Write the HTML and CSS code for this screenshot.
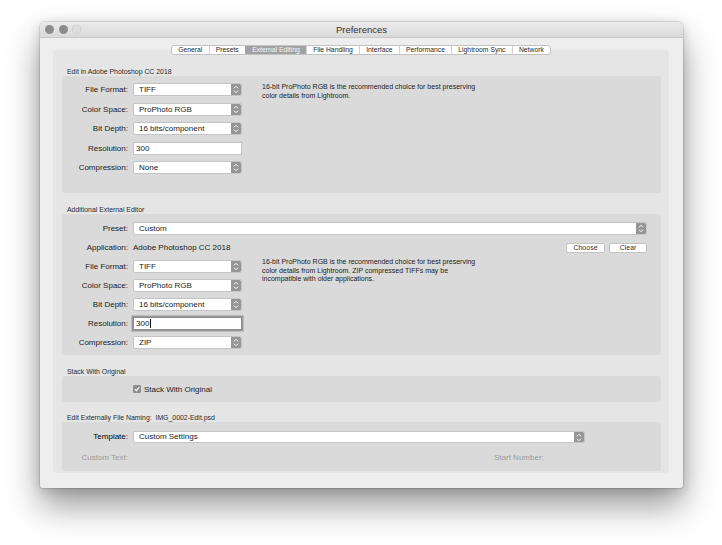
FILE: index.html
```html
<!DOCTYPE html>
<html>
<head>
<meta charset="utf-8">
<link rel="stylesheet" href="styles.css">
</head>
<body>
<div class="stage">
<div class="window">
  <div class="titlebar">
    <div class="lights"><span class="light"></span><span class="light"></span><span class="light off"></span></div>
    <div class="title">Preferences</div>
    <div></div>
  </div>
  <div class="content">
    <div class="tabs">
      <span class="tab">General</span>
      <span class="tab">Presets</span>
      <span class="tab active">External Editing</span>
      <span class="tab">File Handling</span>
      <span class="tab">Interface</span>
      <span class="tab">Performance</span>
      <span class="tab">Lightroom Sync</span>
      <span class="tab">Network</span>
    </div>
    <div class="panel">
      <div class="sec-head">Edit in Adobe Photoshop CC 2018</div>
      <div class="box box1">
        <div class="label">File Format:</div>
        <div class="select"><span class="val">TIFF</span><span class="arrow"><svg width="6" height="9" viewBox="0 0 6 9"><path d="M1 3.3 L3 1.3 L5 3.3 M1 5.7 L3 7.7 L5 5.7" fill="none" stroke="#fff" stroke-width="1"/></svg></span></div>
        <div class="desc">16-bit ProPhoto RGB is the recommended choice for best preserving<br>color details from Lightroom.</div>
        <div class="label">Color Space:</div>
        <div class="select"><span class="val">ProPhoto RGB</span><span class="arrow"><svg width="6" height="9" viewBox="0 0 6 9"><path d="M1 3.3 L3 1.3 L5 3.3 M1 5.7 L3 7.7 L5 5.7" fill="none" stroke="#fff" stroke-width="1"/></svg></span></div>
        <div class="label">Bit Depth:</div>
        <div class="select"><span class="val">16 bits/component</span><span class="arrow"><svg width="6" height="9" viewBox="0 0 6 9"><path d="M1 3.3 L3 1.3 L5 3.3 M1 5.7 L3 7.7 L5 5.7" fill="none" stroke="#fff" stroke-width="1"/></svg></span></div>
        <div class="label">Resolution:</div>
        <div class="input">300</div>
        <div class="label">Compression:</div>
        <div class="select"><span class="val">None</span><span class="arrow"><svg width="6" height="9" viewBox="0 0 6 9"><path d="M1 3.3 L3 1.3 L5 3.3 M1 5.7 L3 7.7 L5 5.7" fill="none" stroke="#fff" stroke-width="1"/></svg></span></div>
      </div>

      <div class="sec-head gap12">Additional External Editor</div>
      <div class="box box2">
        <div class="label">Preset:</div>
        <div class="select wide"><span class="val">Custom</span><span class="arrow"><svg width="6" height="9" viewBox="0 0 6 9"><path d="M1 3.3 L3 1.3 L5 3.3 M1 5.7 L3 7.7 L5 5.7" fill="none" stroke="#fff" stroke-width="1"/></svg></span></div>
        <div class="label">Application:</div>
        <div class="appval">Adobe Photoshop CC 2018</div>
        <div class="buttons"><span class="btn">Choose</span><span class="btn">Clear</span></div>
        <div class="label">File Format:</div>
        <div class="select"><span class="val">TIFF</span><span class="arrow"><svg width="6" height="9" viewBox="0 0 6 9"><path d="M1 3.3 L3 1.3 L5 3.3 M1 5.7 L3 7.7 L5 5.7" fill="none" stroke="#fff" stroke-width="1"/></svg></span></div>
        <div class="desc desc2">16-bit ProPhoto RGB is the recommended choice for best preserving<br>color details from Lightroom. ZIP compressed TIFFs may be<br>incompatible with older applications.</div>
        <div class="label">Color Space:</div>
        <div class="select"><span class="val">ProPhoto RGB</span><span class="arrow"><svg width="6" height="9" viewBox="0 0 6 9"><path d="M1 3.3 L3 1.3 L5 3.3 M1 5.7 L3 7.7 L5 5.7" fill="none" stroke="#fff" stroke-width="1"/></svg></span></div>
        <div class="label">Bit Depth:</div>
        <div class="select"><span class="val">16 bits/component</span><span class="arrow"><svg width="6" height="9" viewBox="0 0 6 9"><path d="M1 3.3 L3 1.3 L5 3.3 M1 5.7 L3 7.7 L5 5.7" fill="none" stroke="#fff" stroke-width="1"/></svg></span></div>
        <div class="label">Resolution:</div>
        <div class="input focus">300<span class="caret"></span></div>
        <div class="label">Compression:</div>
        <div class="select"><span class="val">ZIP</span><span class="arrow"><svg width="6" height="9" viewBox="0 0 6 9"><path d="M1 3.3 L3 1.3 L5 3.3 M1 5.7 L3 7.7 L5 5.7" fill="none" stroke="#fff" stroke-width="1"/></svg></span></div>
      </div>

      <div class="sec-head gap12">Stack With Original</div>
      <div class="box box3">
        <span class="check"><svg width="8" height="8" viewBox="0 0 8 8"><path d="M1.8 4.2 L3.3 5.7 L6.2 2.3" fill="none" stroke="#fff" stroke-width="1.2"/></svg></span>
        <span class="checklabel">Stack With Original</span>
      </div>

      <div class="sec-head gap11">Edit Externally File Naming:&nbsp; IMG_0002-Edit.psd</div>
      <div class="box box4">
        <div class="row4">
          <div class="label dark">Template:</div>
          <div class="select tmpl"><span class="val">Custom Settings</span><span class="arrow"><svg width="6" height="9" viewBox="0 0 6 9"><path d="M1 3.3 L3 1.3 L5 3.3 M1 5.7 L3 7.7 L5 5.7" fill="none" stroke="#fff" stroke-width="1"/></svg></span></div>
        </div>
        <div class="row4">
          <div class="label dim">Custom Text:</div>
          <div class="label dim start">Start Number:</div>
        </div>
      </div>
    </div>
  </div>
</div>
</div>
</body>
</html>
```
FILE: styles.css
```css
* { box-sizing: border-box; }
html, body { height: 100%; }
body {
  margin: 0;
  background: #ffffff;
  font-family: "Liberation Sans", Arial, sans-serif;
  color: #1a1a1a;
}
.stage {
  width: 722px;
  height: 545px;
  padding: 22px 0 0 40px;
  background: #ffffff;
}
.window {
  width: 643px;
  height: 466px;
  background: #eeeeee;
  border-radius: 5px 5px 3px 3px;
  box-shadow: 0 18px 34px rgba(0,0,0,0.40), 0 2px 12px rgba(0,0,0,0.16), 0 0 0 1px rgba(0,0,0,0.10);
  display: flex;
  flex-direction: column;
}
.titlebar {
  height: 16px;
  flex: none;
  background: linear-gradient(#eaeaea, #dadada);
  border-bottom: 1px solid #c8c8c8;
  border-radius: 5px 5px 0 0;
  display: grid;
  grid-template-columns: 1fr auto 1fr;
  align-items: center;
}
.lights { display: flex; gap: 4.5px; padding-left: 5px; }
.light {
  width: 9px; height: 9px; border-radius: 50%;
  background: #8c8c8c;
}
.light.off { background: #dcdcdc; box-shadow: inset 0 0 0 0.5px #c4c4c4; }
.title { font-size: 9.5px; color: #333; }
.content {
  flex: 1;
  padding: 7px 14px 15px 13px;
  display: flex;
  flex-direction: column;
}
.tabs {
  align-self: center;
  display: flex;
  height: 10px;
  position: relative;
  z-index: 1;
  background: #fff;
  border: 1px solid #c2c2c2;
  border-radius: 3px;
  overflow: hidden;
}
.tab {
  font-size: 6.8px;
  line-height: 8px;
  padding: 0 6.2px;
  color: #2a2a2a;
  border-left: 1px solid #d4d4d4;
  white-space: nowrap;
}
.tab:first-child { border-left: none; }
.tab.active { background: #a2a2a2; color: #f6f6f6; border-left-color: #a2a2a2; }
.panel {
  margin-top: -5px;
  height: 423px;
  background: #e5e5e5;
  border-radius: 4px;
  padding: 17px 8px 2px 9px;
}
.sec-head {
  height: 9px;
  line-height: 9px;
  font-size: 6.9px;
  padding-left: 5px;
  color: #2a2a2a;
  white-space: nowrap;
}
.gap12 { margin-top: 12px; }
.gap11 { margin-top: 11px; }
.box {
  background: #dadada;
  border-radius: 3px;
}
.box1, .box2 {
  display: grid;
  grid-template-columns: 66px 109px 1fr;
  column-gap: 5px;
  grid-auto-rows: 13px;
}
.box1 .label, .box2 .label { grid-column: 1; }
.box1 .select, .box1 .input, .box2 .select, .box2 .input, .box2 .appval { grid-column: 2; }
.box1 { height: 117px; padding-top: 7px; row-gap: 6.5px; }
.box2 { height: 141px; padding-top: 8px; row-gap: 6px; padding-right: 14px; }
.label {
  font-size: 8px;
  line-height: 13px;
  text-align: right;
  white-space: nowrap;
  color: #1a1a1a;
}
.select {
  display: flex;
  align-items: stretch;
  height: 13px;
  background: #fff;
  border: 1px solid #c4c4c4;
  border-radius: 2px;
  font-size: 8px;
}
.select .val { flex: 1; padding-left: 5px; line-height: 11px; white-space: nowrap; }
.select .arrow {
  width: 10px;
  flex: none;
  background: #969696;
  border-radius: 0 1.5px 1.5px 0;
  display: flex;
  align-items: center;
  justify-content: center;
}
.box2 .select.wide { grid-column: 2 / -1; }
.input {
  height: 13px;
  background: #fff;
  border: 1px solid #c4c4c4;
  font-size: 8px;
  line-height: 11px;
  padding-left: 2px;
  display: flex;
  align-items: center;
}
.input.focus { box-shadow: 0 0 0 1.5px #9a9a9a; border-color: #8a8a8a; }
.caret { width: 1px; height: 9px; background: #111; margin-left: 0.5px; }
.desc {
  grid-column: 3;
  grid-row: 1 / span 3;
  padding-left: 15px;
  font-size: 7px;
  line-height: 8.5px;
  color: #222;
  white-space: nowrap;
}
.desc2 { grid-row: 3 / span 3; margin-top: -2px; }
.appval { font-size: 8px; line-height: 13px; white-space: nowrap; color: #1a1a1a; }
.buttons { grid-column: 3; justify-self: end; display: flex; gap: 4px; align-items: center; }
.btn {
  height: 10px;
  background: #fff;
  border: 1px solid #c4c4c4;
  border-radius: 2px;
  font-size: 7px;
  line-height: 8px;
  text-align: center;
  color: #333;
}
.btn:first-child { width: 39px; }
.btn:last-child { width: 38px; }
.box3 {
  height: 26px;
  display: flex;
  align-items: center;
  padding-left: 71px;
}
.check {
  width: 8px; height: 8px;
  background: #8e8e8e;
  border-radius: 1.5px;
  display: flex;
}
.checklabel { font-size: 8px; margin-left: 3px; color: #1a1a1a; }
.box4 {
  height: 49px;
  padding-top: 9px;
  display: flex;
  flex-direction: column;
  gap: 9px;
}
.row4 { display: flex; gap: 5px; height: 12px; align-items: center; }
.row4 .label { width: 66px; flex: none; line-height: 12px; }
.label.dark { color: #000; }
.label.dim { color: #9a9a9a; }
.label.start { text-align: left; margin-left: 361px; }
.select.tmpl { width: 452px; height: 12px; }
.select.tmpl .val { line-height: 10px; }
```
